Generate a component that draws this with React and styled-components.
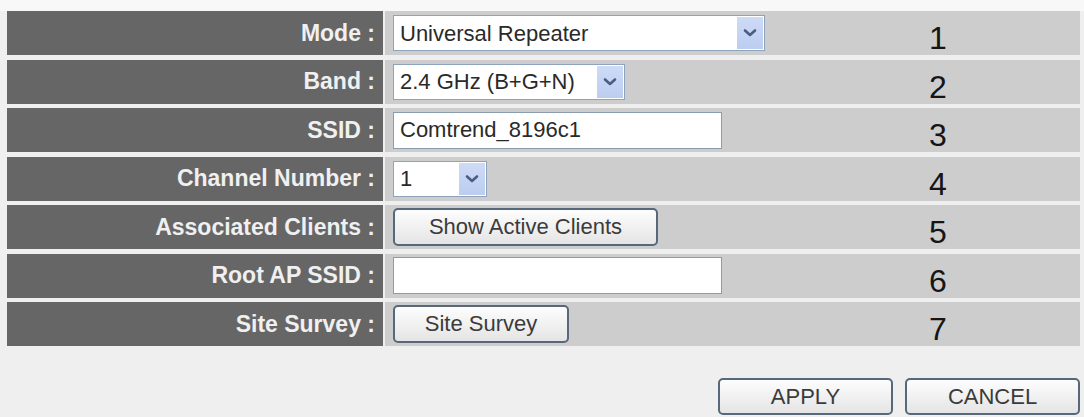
import React, { useState } from "react";
import styled, { createGlobalStyle } from "styled-components";

const GlobalStyle = createGlobalStyle`
  html, body {
    margin: 0;
    padding: 0;
    background: #f3f3f3;
    font-family: "Liberation Sans", Arial, sans-serif;
  }
`;

const Page = styled.div`
  width: 1084px;
  height: 417px;
  padding: 11px 4px 0 7px;
  box-sizing: border-box;
  background: linear-gradient(#f8f8f8 0, #f8f8f8 11px, #efefef 11px);
`;

const Table = styled.div`
  display: grid;
  grid-template-columns: 376px 1fr;
  grid-auto-rows: 44px;
  column-gap: 2px;
  row-gap: 4.5px;
`;

const Label = styled.div`
  display: flex;
  align-items: center;
  justify-content: flex-end;
  padding-right: 8px;
  background: #666666;
  color: #f0f0f0;
  font-weight: bold;
  font-size: 23px;
  white-space: pre;
`;

const Value = styled.div`
  display: grid;
  grid-template-columns: 1fr 284px;
  align-items: center;
  padding-left: 8px;
  background: #cdcdcd;
`;

const Number = styled.div`
  align-self: start;
  padding-top: 11px;
  text-align: center;
  font-size: 32px;
  line-height: 32px;
  color: #151515;
`;

const SelectBox = styled.div`
  display: flex;
  width: ${(p) => p.$width}px;
  height: 36px;
  box-sizing: border-box;
  border: 1px solid #8ea3bd;
  background: #fff;
  padding: 1px;
`;

const NativeSelect = styled.select`
  flex: 1;
  min-width: 0;
  appearance: none;
  border: 0;
  outline: none;
  background: transparent;
  padding: 0 5px;
  font-family: inherit;
  font-size: 22px;
  color: #2a2a2a;
`;

const Arrow = styled.div`
  flex: none;
  width: 26px;
  display: flex;
  align-items: center;
  justify-content: center;
  background: linear-gradient(#cddbf6, #bccdf0);
`;

const TextInput = styled.input`
  width: 329px;
  height: 37px;
  box-sizing: border-box;
  border: 1px solid #8a9cb0;
  background: #fff;
  padding: 0 6px;
  font-family: inherit;
  font-size: 22px;
  color: #2a2a2a;
  outline: none;
`;

const Button = styled.button`
  width: ${(p) => p.$width}px;
  height: ${(p) => p.$height || 38}px;
  box-sizing: border-box;
  border: 2px solid #56687a;
  border-radius: 5px;
  background: linear-gradient(#fdfdfd, #f1f1f1 50%, #e4e4e4);
  font-family: inherit;
  font-size: 22px;
  color: #3b3b3b;
  padding: 0;
  cursor: pointer;
`;

const Footer = styled.div`
  display: flex;
  justify-content: flex-end;
  gap: 12px;
  margin-top: 32px;
`;

function Chevron() {
  return (
    <svg width="14" height="10" viewBox="0 0 14 10">
      <path d="M2 2.5 L7 7 L12 2.5" fill="none" stroke="#4a5d82" strokeWidth="2.6" strokeLinecap="round" strokeLinejoin="round" />
    </svg>
  );
}

function Select({ width, options, value, onChange }) {
  return (
    <SelectBox $width={width}>
      <NativeSelect value={value} onChange={(e) => onChange(e.target.value)}>
        {options.map((o) => (
          <option key={o}>{o}</option>
        ))}
      </NativeSelect>
      <Arrow>
        <Chevron />
      </Arrow>
    </SelectBox>
  );
}

export default function App() {
  const [mode, setMode] = useState("Universal Repeater");
  const [band, setBand] = useState("2.4 GHz (B+G+N)");
  const [ssid, setSsid] = useState("Comtrend_8196c1");
  const [channel, setChannel] = useState("1");
  const [rootSsid, setRootSsid] = useState("");

  const rows = [
    {
      label: "Mode :",
      control: (
        <Select width={372} value={mode} onChange={setMode}
          options={["Universal Repeater", "AP", "Station", "AP Bridge-Point to Point"]} />
      ),
    },
    {
      label: "Band :",
      control: (
        <Select width={232} value={band} onChange={setBand}
          options={["2.4 GHz (B+G+N)", "2.4 GHz (B)", "2.4 GHz (G)", "2.4 GHz (N)"]} />
      ),
    },
    {
      label: "SSID :",
      control: <TextInput value={ssid} onChange={(e) => setSsid(e.target.value)} />,
    },
    {
      label: "Channel Number :",
      control: (
        <Select width={94} value={channel} onChange={setChannel}
          options={Array.from({ length: 13 }, (_, i) => String(i + 1))} />
      ),
    },
    {
      label: "Associated Clients :",
      control: <Button $width={265}>Show Active Clients</Button>,
    },
    {
      label: "Root AP SSID :",
      control: <TextInput value={rootSsid} onChange={(e) => setRootSsid(e.target.value)} />,
    },
    {
      label: "Site Survey :",
      control: <Button $width={176}>Site Survey</Button>,
    },
  ];

  return (
    <>
      <GlobalStyle />
      <Page>
        <Table>
          {rows.map((r, i) => (
            <React.Fragment key={r.label}>
              <Label>{r.label}</Label>
              <Value>
                <div>{r.control}</div>
                <Number>{i + 1}</Number>
              </Value>
            </React.Fragment>
          ))}
        </Table>
        <Footer>
          <Button $width={175} $height={37}>APPLY</Button>
          <Button $width={175} $height={37}>CANCEL</Button>
        </Footer>
      </Page>
    </>
  );
}
